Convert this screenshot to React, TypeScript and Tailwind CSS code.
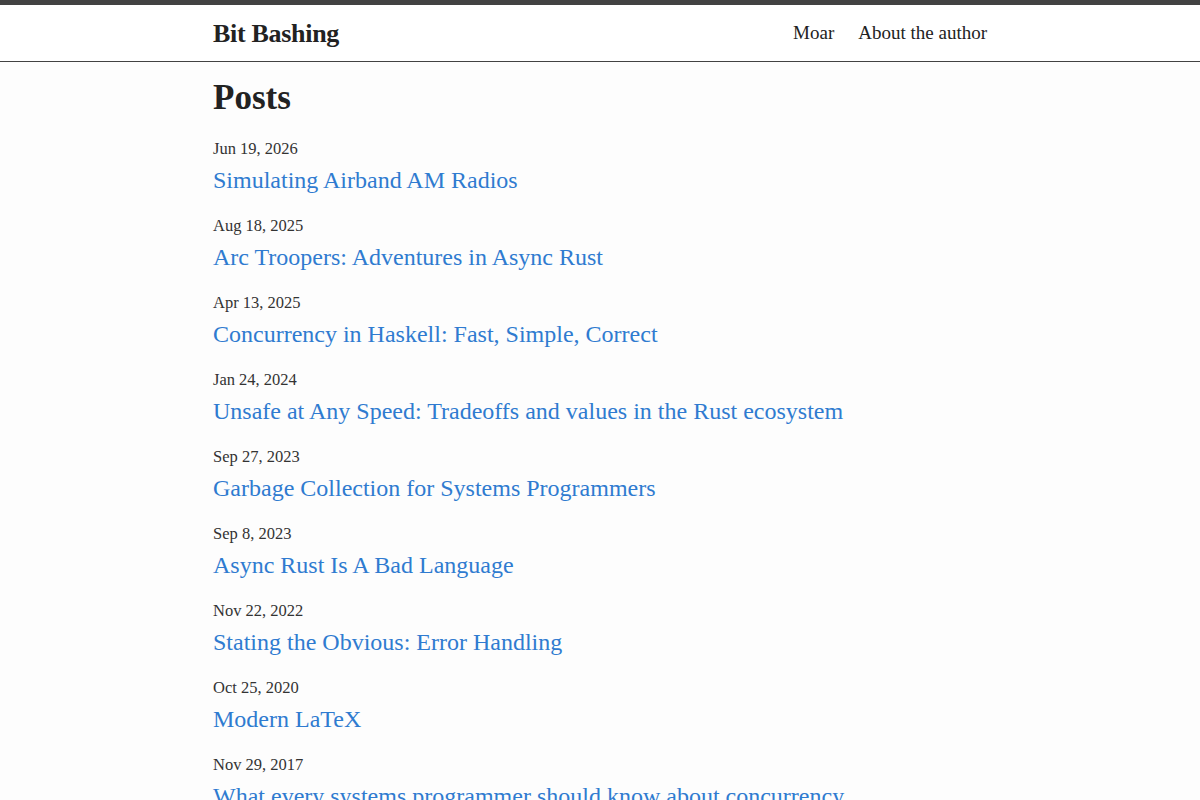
const posts = [
  { date: "Jun 19, 2026", title: "Simulating Airband AM Radios" },
  { date: "Aug 18, 2025", title: "Arc Troopers: Adventures in Async Rust" },
  { date: "Apr 13, 2025", title: "Concurrency in Haskell: Fast, Simple, Correct" },
  { date: "Jan 24, 2024", title: "Unsafe at Any Speed: Tradeoffs and values in the Rust ecosystem" },
  { date: "Sep 27, 2023", title: "Garbage Collection for Systems Programmers" },
  { date: "Sep 8, 2023", title: "Async Rust Is A Bad Language" },
  { date: "Nov 22, 2022", title: "Stating the Obvious: Error Handling" },
  { date: "Oct 25, 2020", title: "Modern LaTeX" },
  { date: "Nov 29, 2017", title: "What every systems programmer should know about concurrency" },
];

export default function App() {
  return (
    <div className="min-h-screen bg-[#fdfdfd] text-[#222] font-['Liberation_Serif',serif]">
      <header className="border-t-[5px] border-t-[#424242] border-b border-b-[#424242] bg-white">
        <div className="w-[774px] mx-auto h-[56px] flex items-center justify-between">
          <a className="text-[26px] font-bold tracking-[-0.3px]">Bit Bashing</a>
          <nav className="flex gap-6 text-[19px]">
            <a>Moar</a>
            <a>About the author</a>
          </nav>
        </div>
      </header>

      <main className="w-[774px] mx-auto pt-[14px]">
        <h1 className="text-[35px] font-bold leading-[44px] mb-[17px]">Posts</h1>
        <ul>
          {posts.map((p, i) => (
            <li key={i} className="mb-[19px]">
              <div className="text-[16.5px] leading-[24px] text-[#333]">{p.date}</div>
              <a className="block mt-[4px] text-[24px] leading-[30px] text-[#2f7bd0]">{p.title}</a>
            </li>
          ))}
        </ul>
      </main>
    </div>
  );
}
